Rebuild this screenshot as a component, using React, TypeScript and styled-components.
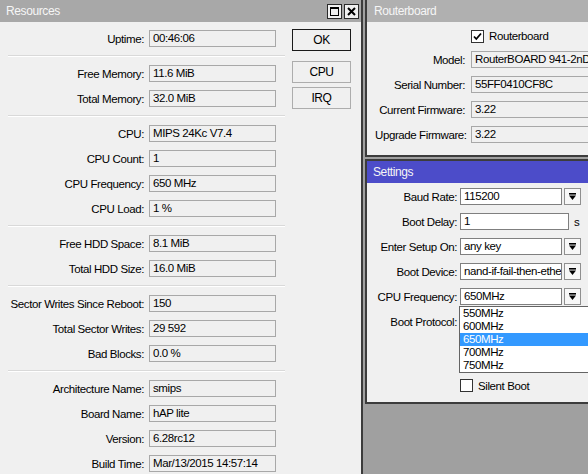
import React from "react";
import styled, { createGlobalStyle } from "styled-components";

const GlobalStyle = createGlobalStyle`
  html, body {
    margin: 0;
    padding: 0;
    background: #a0a0a0;
  }
  body {
    font-family: "Liberation Sans", Arial, sans-serif;
    font-size: 11.5px;
    letter-spacing: -0.4px;
    color: #000;
  }
`;

const Desktop = styled.div`
  width: 588px;
  height: 474px;
  overflow: hidden;
  background: #a0a0a0;
`;

const Windows = styled.div`
  display: flex;
  align-items: flex-start;
  gap: 2px;
  margin: -2px 0 0 -2px;
`;

const Column = styled.div`
  display: flex;
  flex-direction: column;
  gap: 2px;
`;

const Window = styled.div<{ $width: number }>`
  width: ${(p) => p.$width}px;
  flex-shrink: 0;
  border: 2px solid #3c3c3c;
  background: #f0f0f0;
`;

const TitleBar = styled.div<{ $tone: string; $indent: number }>`
  height: 22px;
  display: flex;
  align-items: center;
  padding: 0 2px 0 ${(p) => p.$indent}px;
  background: ${(p) => p.$tone};
  color: #f6f6f6;
  font-size: 12px;
`;

const TitleText = styled.span`
  flex: 1;
`;

const TitleButtons = styled.div`
  display: flex;
  gap: 2px;
`;

const TitleButton = styled.div`
  width: 15px;
  height: 15px;
  box-sizing: border-box;
  border: 1px solid #2a2a2a;
  background: #f0f0f0;
  display: flex;
  align-items: center;
  justify-content: center;
`;

const ResourcesBody = styled.div`
  display: flex;
  gap: 7px;
  padding: 8px 0 0 8px;
  height: 470px;
`;

const Form = styled.div<{ $width?: number; $labelWidth: number; $labelGap: number }>`
  width: ${(p) => (p.$width ? `${p.$width}px` : "auto")};
  display: flex;
  flex-direction: column;
  gap: 8px;
  --label-width: ${(p) => p.$labelWidth}px;
  --label-gap: ${(p) => p.$labelGap}px;
`;

const Row = styled.div<{ $offset?: number; $alignEnd?: boolean }>`
  display: flex;
  align-items: ${(p) => (p.$alignEnd ? "flex-end" : "center")};
  height: 17px;
  margin-top: ${(p) => p.$offset ?? 0}px;
`;

const Label = styled.span`
  width: var(--label-width);
  margin-right: var(--label-gap);
  flex-shrink: 0;
  text-align: right;
  white-space: nowrap;
`;

const Field = styled.div<{ $width: number; $editable?: boolean }>`
  box-sizing: border-box;
  width: ${(p) => p.$width}px;
  height: 17px;
  flex-shrink: 0;
  border: 1px solid ${(p) => (p.$editable ? "#7f7f7f" : "#a8a8a8")};
  background: ${(p) => (p.$editable ? "#ffffff" : "#f0f0f0")};
  padding: 0 3px;
  line-height: 15px;
  white-space: nowrap;
  overflow: hidden;
`;

const Separator = styled.div`
  height: 0;
  border-top: 1px solid #d9d9d9;
  border-bottom: 1px solid #ffffff;
`;

const ButtonColumn = styled.div`
  display: flex;
  flex-direction: column;
  margin-top: -1px;
`;

const DialogButton = styled.div<{ $default?: boolean; $after: number }>`
  box-sizing: border-box;
  width: 59px;
  height: 22px;
  margin-bottom: ${(p) => p.$after}px;
  border: 1px solid ${(p) => (p.$default ? "#1a1a1a" : "#adadad")};
  background: #f0f0f0;
  display: flex;
  align-items: center;
  justify-content: center;
  font-size: 12px;
`;

const PanelBody = styled.div<{ $top: number; $bottom: number }>`
  padding: ${(p) => p.$top}px 0 ${(p) => p.$bottom}px 8px;
`;

const Combo = styled.div`
  position: relative;
  display: flex;
  gap: 2px;
`;

const DropButton = styled.div`
  box-sizing: border-box;
  width: 17px;
  height: 17px;
  border: 1px solid #8f8f8f;
  background: #f7f7f7;
  display: flex;
  align-items: center;
  justify-content: center;
`;

const Unit = styled.span`
  margin-left: 5px;
`;

const CheckBox = styled.span`
  box-sizing: border-box;
  width: 13px;
  height: 13px;
  flex-shrink: 0;
  border: 1px solid #333;
  background: #fff;
  display: flex;
  align-items: center;
  justify-content: center;
`;

const CheckLabel = styled.span`
  margin-left: 5px;
  line-height: 14px;
`;

const OptionList = styled.div`
  position: absolute;
  top: calc(100% + 1px);
  left: -1px;
  width: 200px;
  background: #fff;
  border: 1px solid #646464;
  z-index: 5;
`;

const Option = styled.div<{ $selected?: boolean }>`
  height: 13px;
  line-height: 13px;
  padding-left: 3px;
  background: ${(p) => (p.$selected ? "#3399ff" : "transparent")};
  color: ${(p) => (p.$selected ? "#ffffff" : "#000000")};
`;

const DropIcon = () => (
  <svg width="9" height="9" viewBox="0 0 9 9">
    <rect x="1" y="1" width="7" height="1.6" fill="#000" />
    <path d="M1 3.6h7L4.5 8z" fill="#000" />
  </svg>
);

const MaximizeIcon = () => (
  <svg width="11" height="11" viewBox="0 0 11 11">
    <rect x="1.5" y="1.5" width="8" height="8" fill="none" stroke="#000" />
    <rect x="1" y="1" width="9" height="2" fill="#000" />
  </svg>
);

const CloseIcon = () => (
  <svg width="11" height="11" viewBox="0 0 11 11">
    <path d="M2 2l7 7M9 2l-7 7" stroke="#000" strokeWidth="2" />
  </svg>
);

const CheckIcon = () => (
  <svg width="9" height="9" viewBox="0 0 9 9">
    <path d="M1 4.5l2.3 2.5L8 1.5" fill="none" stroke="#000" strokeWidth="1.8" />
  </svg>
);

type Item = { label: string; value: string };

const resourceSections: Item[][] = [
  [{ label: "Uptime:", value: "00:46:06" }],
  [
    { label: "Free Memory:", value: "11.6 MiB" },
    { label: "Total Memory:", value: "32.0 MiB" },
  ],
  [
    { label: "CPU:", value: "MIPS 24Kc V7.4" },
    { label: "CPU Count:", value: "1" },
    { label: "CPU Frequency:", value: "650 MHz" },
    { label: "CPU Load:", value: "1 %" },
  ],
  [
    { label: "Free HDD Space:", value: "8.1 MiB" },
    { label: "Total HDD Size:", value: "16.0 MiB" },
  ],
  [
    { label: "Sector Writes Since Reboot:", value: "150" },
    { label: "Total Sector Writes:", value: "29 592" },
    { label: "Bad Blocks:", value: "0.0 %" },
  ],
  [
    { label: "Architecture Name:", value: "smips" },
    { label: "Board Name:", value: "hAP lite" },
    { label: "Version:", value: "6.28rc12" },
    { label: "Build Time:", value: "Mar/13/2015 14:57:14" },
  ],
];

const routerboardInfo: Item[] = [
  { label: "Model:", value: "RouterBOARD 941-2nD" },
  { label: "Serial Number:", value: "55FF0410CF8C" },
  { label: "Current Firmware:", value: "3.22" },
  { label: "Upgrade Firmware:", value: "3.22" },
];

const frequencies = ["550MHz", "600MHz", "650MHz", "700MHz", "750MHz"];

const ResourcesWindow: React.FC = () => (
  <Window $width={361}>
    <TitleBar $tone="#a8a8a8" $indent={6}>
      <TitleText>Resources</TitleText>
      <TitleButtons>
        <TitleButton>
          <MaximizeIcon />
        </TitleButton>
        <TitleButton>
          <CloseIcon />
        </TitleButton>
      </TitleButtons>
    </TitleBar>
    <ResourcesBody>
      <Form $width={277} $labelWidth={136} $labelGap={5}>
        {resourceSections.map((section, i) => (
          <React.Fragment key={i}>
            {i > 0 && <Separator />}
            {section.map((item) => (
              <Row key={item.label}>
                <Label>{item.label}</Label>
                <Field $width={127}>{item.value}</Field>
              </Row>
            ))}
          </React.Fragment>
        ))}
      </Form>
      <ButtonColumn>
        <DialogButton $default $after={10}>
          OK
        </DialogButton>
        <DialogButton $after={4}>CPU</DialogButton>
        <DialogButton $after={0}>IRQ</DialogButton>
      </ButtonColumn>
    </ResourcesBody>
  </Window>
);

const RouterboardWindow: React.FC = () => (
  <Window $width={245}>
    <TitleBar $tone="#b0b0b0" $indent={7}>
      <TitleText>Routerboard</TitleText>
    </TitleBar>
    <PanelBody $top={4} $bottom={12}>
      <Form $labelWidth={90} $labelGap={6}>
        <Row $alignEnd>
          <Label />
          <CheckBox>
            <CheckIcon />
          </CheckBox>
          <CheckLabel>Routerboard</CheckLabel>
        </Row>
        {routerboardInfo.map((item) => (
          <Row key={item.label}>
            <Label>{item.label}</Label>
            <Field $width={125}>{item.value}</Field>
          </Row>
        ))}
      </Form>
    </PanelBody>
  </Window>
);

const SettingsWindow: React.FC = () => (
  <Window $width={245}>
    <TitleBar $tone="#4c4cc9" $indent={6}>
      <TitleText>Settings</TitleText>
    </TitleBar>
    <PanelBody $top={5} $bottom={8}>
      <Form $labelWidth={82} $labelGap={3}>
        <Row>
          <Label>Baud Rate:</Label>
          <Combo>
            <Field $width={102} $editable>
              115200
            </Field>
            <DropButton>
              <DropIcon />
            </DropButton>
          </Combo>
        </Row>
        <Row>
          <Label>Boot Delay:</Label>
          <Field $width={109} $editable>
            1
          </Field>
          <Unit>s</Unit>
        </Row>
        <Row>
          <Label>Enter Setup On:</Label>
          <Combo>
            <Field $width={102} $editable>
              any key
            </Field>
            <DropButton>
              <DropIcon />
            </DropButton>
          </Combo>
        </Row>
        <Row>
          <Label>Boot Device:</Label>
          <Combo>
            <Field $width={102} $editable>
              nand-if-fail-then-ethernet
            </Field>
            <DropButton>
              <DropIcon />
            </DropButton>
          </Combo>
        </Row>
        <Row>
          <Label>CPU Frequency:</Label>
          <Combo>
            <Field $width={102} $editable>
              650MHz
            </Field>
            <DropButton>
              <DropIcon />
            </DropButton>
            <OptionList>
              {frequencies.map((f) => (
                <Option key={f} $selected={f === "650MHz"}>
                  {f}
                </Option>
              ))}
            </OptionList>
          </Combo>
        </Row>
        <Row>
          <Label>Boot Protocol:</Label>
          <Combo>
            <Field $width={102} $editable />
            <DropButton>
              <DropIcon />
            </DropButton>
          </Combo>
        </Row>
        <Row $offset={39}>
          <Label />
          <CheckBox />
          <CheckLabel>Silent Boot</CheckLabel>
        </Row>
      </Form>
    </PanelBody>
  </Window>
);

const App: React.FC = () => (
  <Desktop>
    <GlobalStyle />
    <Windows>
      <ResourcesWindow />
      <Column>
        <RouterboardWindow />
        <SettingsWindow />
      </Column>
    </Windows>
  </Desktop>
);

export default App;
